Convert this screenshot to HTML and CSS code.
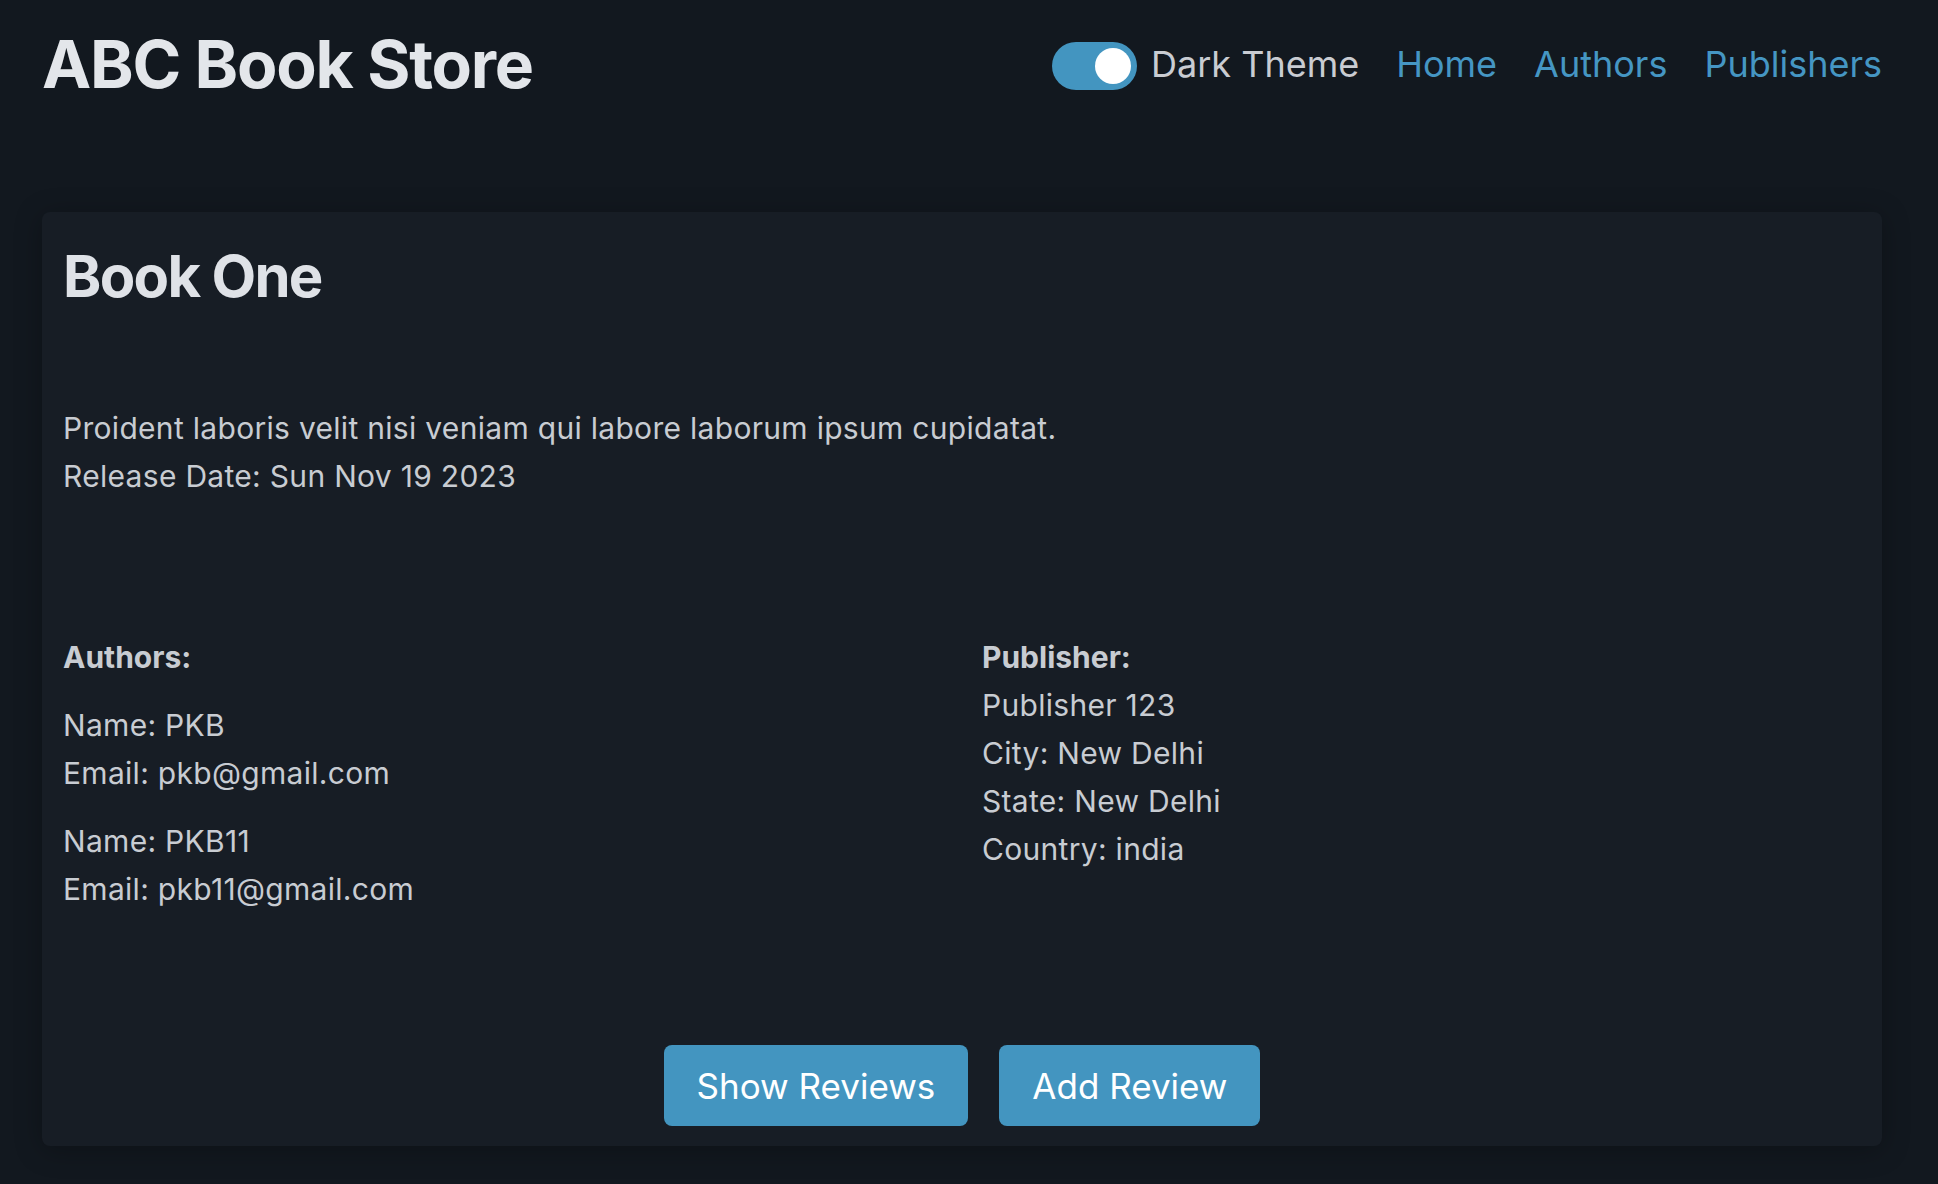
FILE: index.html
```html
<!DOCTYPE html>
<html lang="en">
<head>
<meta charset="utf-8">
<title>ABC Book Store</title>
<link rel="stylesheet" href="styles.css">
</head>
<body>
<header class="header">
  <h1 class="brand">ABC Book Store</h1>
  <nav class="nav">
    <label class="theme">
      <span class="toggle"><span class="knob"></span></span>
      <span class="theme-label">Dark Theme</span>
    </label>
    <a class="nav-link" href="#">Home</a>
    <a class="nav-link" href="#">Authors</a>
    <a class="nav-link" href="#">Publishers</a>
  </nav>
</header>
<main class="card">
  <h2 class="book-title">Book One</h2>
  <div class="desc">
    <p class="line">Proident laboris velit nisi veniam qui labore laborum ipsum cupidatat.</p>
    <p class="line">Release Date: Sun Nov 19 2023</p>
  </div>
  <div class="details">
    <section class="col">
      <h3 class="col-head">Authors:</h3>
      <div class="author">
        <p class="line">Name: PKB</p>
        <p class="line">Email: pkb@gmail.com</p>
      </div>
      <div class="author">
        <p class="line">Name: PKB11</p>
        <p class="line">Email: pkb11@gmail.com</p>
      </div>
    </section>
    <section class="col">
      <h3 class="col-head">Publisher:</h3>
      <p class="line">Publisher 123</p>
      <p class="line">City: New Delhi</p>
      <p class="line">State: New Delhi</p>
      <p class="line">Country: india</p>
    </section>
  </div>
  <div class="actions">
    <button class="btn">Show Reviews</button>
    <button class="btn">Add Review</button>
  </div>
</main>
</body>
</html>
```
FILE: styles.css
```css
* { box-sizing: border-box; }
html, body { margin: 0; padding: 0; }
body {
  background: #12181f;
  font-family: Inter, "Noto Sans", "DejaVu Sans", sans-serif;
  color: #c8ccd2;
  padding: 24px 56px 38px 42px;
  min-height: 1184px;
}
.header {
  display: flex;
  align-items: center;
  justify-content: space-between;
  height: 80px;
}
.brand {
  margin: 0;
  font-size: 66px;
  line-height: 80px;
  font-weight: 700;
  color: #e3e6ea;
  letter-spacing: -1.2px;
}
.nav {
  display: flex;
  align-items: center;
  gap: 37px;
}
.theme {
  display: flex;
  align-items: center;
  gap: 14px;
}
.toggle {
  width: 85px;
  height: 48px;
  border-radius: 24px;
  background: #4395c0;
  display: flex;
  align-items: center;
  justify-content: flex-end;
  padding-right: 6px;
  margin-top: 4px;
}
.knob {
  width: 36px;
  height: 36px;
  border-radius: 50%;
  background: #ffffff;
}
.theme-label {
  font-size: 36px;
  line-height: 48px;
  color: #c9ccd2;
}
.nav-link {
  font-size: 36px;
  line-height: 48px;
  color: #4596c3;
  text-decoration: none;
}
.card {
  margin-top: 108px;
  background: #171d25;
  border-radius: 8px;
  padding: 29px 21px 20px;
  box-shadow: 0 4px 28px rgba(0, 0, 0, 0.28);
}
.book-title {
  margin: 0;
  font-size: 58px;
  line-height: 70px;
  font-weight: 700;
  color: #dfe2e7;
  letter-spacing: -1.7px;
}
.line {
  margin: 0;
  font-size: 30px;
  line-height: 48px;
  letter-spacing: 0.3px;
}
.desc {
  margin-top: 93px;
}
.details {
  margin-top: 133px;
  display: grid;
  grid-template-columns: 1fr 1fr;
  gap: 40px;
}
.col-head {
  margin: 0;
  font-size: 30px;
  line-height: 48px;
  font-weight: 700;
  color: #c8ccd2;
}
.author {
  margin-top: 20px;
}
.actions {
  margin-top: 132px;
  display: flex;
  justify-content: center;
  gap: 31px;
}
.btn {
  height: 81px;
  padding: 0 33px;
  border: none;
  border-radius: 8px;
  background: #4395c0;
  color: #ffffff;
  font-family: Inter, "Noto Sans", sans-serif;
  font-size: 35px;
  cursor: pointer;
}
```
